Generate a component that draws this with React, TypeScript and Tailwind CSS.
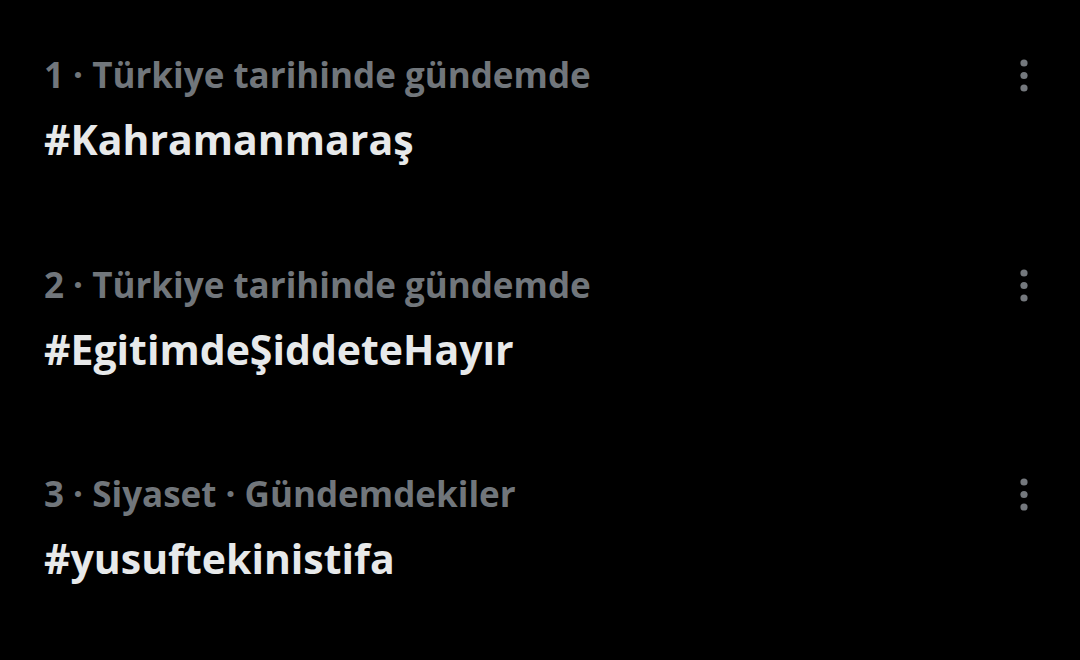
import React from "react";

const trends = [
  { meta: "1 · Türkiye tarihinde gündemde", name: "#Kahramanmaraş" },
  { meta: "2 · Türkiye tarihinde gündemde", name: "#EgitimdeŞiddeteHayır" },
  { meta: "3 · Siyaset · Gündemdekiler", name: "#yusuftekinistifa" },
];

function Dots() {
  return (
    <svg width="20" height="44" viewBox="0 0 20 44" className="shrink-0">
      <circle cx="10" cy="10" r="3.6" fill="#74787d" />
      <circle cx="10" cy="22.5" r="3.6" fill="#74787d" />
      <circle cx="10" cy="35" r="3.6" fill="#74787d" />
    </svg>
  );
}

export default function App() {
  return (
    <div
      className="w-[1080px] h-[660px] bg-black overflow-hidden"
      style={{ fontFamily: '"Open Sans", "Noto Sans", sans-serif' }}
    >
      {trends.map((t) => (
        <div key={t.name} className="flex items-start pl-[44px] pr-[46px] pt-[53px] pb-[42.5px]">
          <div className="flex-1 flex flex-col">
            <div className="text-[35px] leading-[44px] font-bold text-[#71767b]">{t.meta}</div>
            <div className="mt-[15px] text-[41px] leading-[55px] font-bold text-[#e7e9ea]">{t.name}</div>
          </div>
          <Dots />
        </div>
      ))}
    </div>
  );
}
